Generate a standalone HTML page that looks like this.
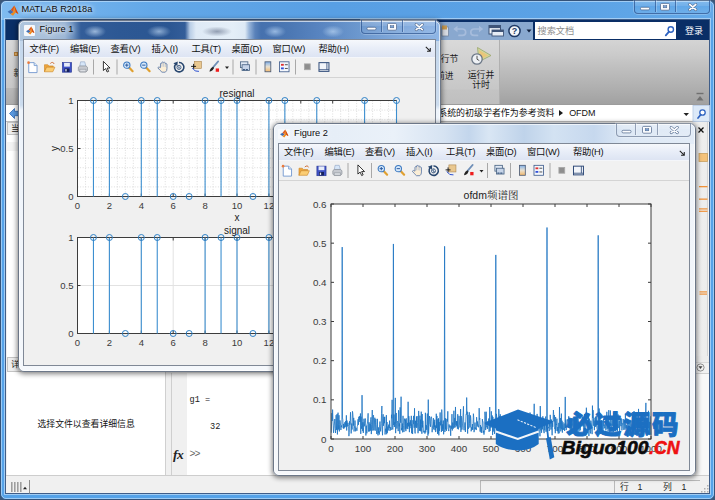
<!DOCTYPE html><html lang="zh"><head><meta charset="utf-8"><title>MATLAB R2018a</title><style>
*{box-sizing:border-box}
html,body{margin:0;padding:0}
body{width:715px;height:500px;overflow:hidden;position:relative;background:#3d5878;font-family:"Liberation Sans","Noto Sans CJK SC",sans-serif;font-size:9.5px;line-height:1;color:#111}
.abs{position:absolute;left:0;top:0;pointer-events:none}
#mw{position:absolute;left:0;top:0;width:715px;height:500px;border:1px solid #34537a;border-radius:6px;
 background:linear-gradient(90deg,#7fbbf0 0,#78b6ee 40px,#63a8e8 150px,#589fe4 330px,#5ba2e5 560px,#64a9e9 715px) 0 0/100% 19px no-repeat,#55a2e8}
#mw:before{content:"";position:absolute;left:0;top:0;right:0;bottom:0;border:1px solid rgba(215,236,255,.55);border-radius:5px}
#mtitle{position:absolute;left:20.5px;top:4.2px;font-size:9.2px;color:#0c0c0c;white-space:nowrap;text-shadow:0 0 4px rgba(255,255,255,.9),0 0 7px rgba(255,255,255,.8)}
.wbtns{position:absolute;border:1px solid rgba(45,85,145,.75);border-top:0;border-radius:0 0 4px 4px;background:linear-gradient(rgba(255,255,255,.22),rgba(255,255,255,.10) 45%,rgba(255,255,255,0) 50%,rgba(255,255,255,.08));box-shadow:0 0 0 1px rgba(255,255,255,.22)}
.wbtns.lt{border-color:rgba(120,135,160,.8)}
.wbtns.lt i{background:rgba(120,135,160,.75)}
.wbtns i{position:absolute;top:0;width:1px;height:12px;background:rgba(45,85,145,.7);box-shadow:1px 0 0 rgba(255,255,255,.25)}
#mc{position:absolute;left:4px;top:18px;width:705px;height:475px;background:#f0f0f0;border:1px solid #3f5d88;box-shadow:0 0 0 1px rgba(210,232,252,.6);overflow:hidden}
#navy{position:absolute;background:#0a2e66}
#qat{position:absolute;background:#89a8cf}
#search{position:absolute;background:#fff}
#search span{position:absolute;left:3px;top:5.3px;font-size:9.2px;color:#8c8c8c;white-space:nowrap}
#login{position:absolute;font-size:9px;color:#fff;white-space:nowrap}
#ribbon{position:absolute;background:linear-gradient(#d4d4d4 0,#cbcbcb 14px,#bfbfbf 28px,#b4b4b4 42px,#aaaaaa 54px,#a1a1a1 64px)}
#rsec{position:absolute;left:0;top:0;width:494px;height:64px;border-right:1px solid #b0b0b0;background:linear-gradient(#d9d9d9 0,#d1d1d1 20px,#c7c7c7 49px,#c3c3c3 50px,#bfbfbf 64px)}
.rt{position:absolute;font-size:8.8px;color:#1a1a1a;white-space:nowrap}
#addr{position:absolute;background:#fff;border-top:1px solid #9c9c9c;border-bottom:1px solid #bdbdbd}
#addrt{position:absolute;left:432.2px;top:4.2px;font-size:8.96px;white-space:nowrap;color:#111}
#addrt b{display:inline-block;width:0;height:0;border-left:4.2px solid #1a1a1a;border-top:3.3px solid transparent;border-bottom:3.3px solid transparent;margin:0 6.2px 0.6px 4.4px}
#addrt i{font-style:normal;font-size:8.96px}
#below{position:absolute;background:#f0f0f0}
#lp_hdr1{position:absolute;background:#eeeeee;border:1px solid #c4c4c4;font-size:8.5px;line-height:10.5px;padding-left:3px;color:#222;overflow:hidden}
#lp_col{position:absolute;background:linear-gradient(#fff 0,#fff 7px,#f3f3f3 7px,#f3f3f3 16px,#fff 16px)}
#lp_hdr2{position:absolute;background:#eeeeee;border:1px solid #c4c4c4;font-size:8.5px;line-height:12.5px;padding-left:3px;color:#222;overflow:hidden}
#lp_detail{position:absolute;background:#fff;border-right:1px solid #d0d0d0}
#lp_detail span{position:absolute;left:30.5px;top:48.8px;font-size:8.85px;white-space:nowrap;color:#111}
#cmd{position:absolute;background:#fff;border-left:1px solid #cfcfcf;overflow:hidden}
#cmdg{position:absolute;left:0;top:0;width:15px;height:103px;background:#f0f0f0}
.mono{position:absolute;font-family:"Liberation Mono",monospace;font-size:8.6px;color:#222;white-space:nowrap}
#fx{position:absolute;left:1.5px;top:75px;font-family:"Liberation Serif",serif;font-style:italic;font-weight:bold;font-size:13.5px;color:#222;letter-spacing:-0.5px}
#rstrip{position:absolute;background:linear-gradient(90deg,#f1f1f1 0,#ececec 12px,#d4d4d4 12px,#d4d4d4 13px,#f4f4f4 13px)}
#status{position:absolute;background:#f0f0f0;border-top:1px solid #cdcdcd}
#st1{position:absolute;left:474px;top:3.5px;width:133.5px;height:14px;border:1px solid #b9b9b9;border-right:0;border-bottom:0}
#st3{position:absolute;left:607.5px;top:3.5px;width:86px;height:14px;border:1px solid #b9b9b9;border-right:0;border-bottom:0;font-size:8.8px;color:#222}
#st3 span{position:absolute;top:2.2px}
.fw{position:absolute;border:1px solid #6c7788;border-radius:6px;box-shadow:0 1px 5px 1px rgba(0,0,0,.48)}
.fw:before{content:"";position:absolute;left:0;top:0;right:0;bottom:0;border:1px solid rgba(255,255,255,.65);border-radius:5px}
.ficon{position:absolute;left:4.8px;top:4.5px;width:11.5px;height:10.5px;background:#f6f8fb;border-radius:1px}
.ftitle{position:absolute;left:20.5px;top:4.5px;font-size:9.25px;color:#0c0c0c;white-space:nowrap;text-shadow:0 0 4px rgba(255,255,255,.95),0 0 7px rgba(255,255,255,.85)}
.finner{position:absolute;background:#f0f0f0;border:1px solid #7f8896;overflow:hidden}
.fmenu{position:absolute;left:0;top:0;right:0;height:17.500px;background:linear-gradient(#f6f8fc,#e9eef8 45%,#dde4f3);border-bottom:1px solid #f4f6fa}
.fmenu span{position:absolute;top:4.600px;font-size:9.300px;white-space:nowrap;color:#111;letter-spacing:-0.200px}
.ftool{position:absolute;left:0;top:17.500px;right:0;height:20px;background:#f1f1f1;border-bottom:1px solid #d4d4d4}
</style></head><body><div id="mw"><svg width="12" height="11.5" viewBox="0 0 16 16" style="position:absolute;left:5.5px;top:3.8px"><path d="M0.5 9.5 L5 6.5 L8.5 10 L4.5 12.5 Z" fill="#3f6fb5"/><path d="M5 6.5 L9.8 0.8 L8.5 10 Z" fill="#d9541e"/><path d="M9.8 0.8 L15.5 12.5 L11.5 10.5 L8 15 L4.5 12.5 L8.5 10 Z" fill="#f08a1c"/><path d="M9.8 0.8 L15.5 12.5 L12 10.6 Z" fill="#c8401a"/></svg><div id="mtitle">MATLAB R2018a</div><div class="wbtns" style="left:633px;top:-1px;width:76px;height:14px"><i style="left:20px"></i><i style="left:39.5px"></i><svg width="76" height="13" viewBox="0 0 76 13" style="position:absolute;left:0;top:0"><rect x="5.5" y="7.3" width="9" height="2.6" rx="1.1" fill="#fbfcfe" stroke="#4a6388" stroke-width="0.7"/><rect x="25.5" y="3.4" width="9" height="6.8" rx="1.2" fill="#fbfcfe" stroke="#4a6388" stroke-width="0.7"/><rect x="28.2" y="5.7" width="3.6" height="2.1" fill="#7aa3d6" stroke="#4a6388" stroke-width="0.5"/><path d="M54.7 4.5 L60.8 9.6 M60.8 4.5 L54.7 9.6" stroke="#4a6388" stroke-width="2.9" stroke-linecap="round"/><path d="M54.7 4.5 L60.8 9.6 M60.8 4.5 L54.7 9.6" stroke="#fbfcfe" stroke-width="1.7" stroke-linecap="round"/></svg></div><div id="mc"><div id="navy" style="left:0px;top:0px;width:703px;height:20px;"></div><div id="qat" style="left:432px;top:1.5px;width:95px;height:18px;"></div><div id="search" style="left:528.5px;top:1.5px;width:141.5px;height:17.5px;"><span>搜索文档</span></div><div id="login" style="left:679px;top:6.5px;">登录</div><div id="ribbon" style="left:0px;top:20px;width:703px;height:64px;"><div id="rsec"></div></div><div class="rt" style="left:426px;top:34.5px;">运行节</div><div class="rt" style="left:430px;top:52px;">前进</div><div class="rt" style="left:456px;top:49.5px;width:38px;;text-align:center;line-height:10.5px">运行并<br>计时</div><div style="position:absolute;left:0px;top:68px;width:14px;height:16px;;background:linear-gradient(#b9b9b9,#adadad)"></div><div style="position:absolute;left:8px;top:32px;width:3.5px;height:4px;;background:#e9b56a;border:1px solid #b9813a"></div><div class="rt" style="left:7.5px;top:48.5px;;font-size:9px">新</div><div id="addr" style="left:0px;top:84px;width:703px;height:17.5px;"><span id="addrt">系统的初级学者作为参考资料<b></b><i>OFDM</i></span></div><div id="below" style="left:0px;top:101.5px;width:703px;height:355px;"></div><div id="lp_hdr1" style="left:1px;top:102px;width:160px;height:12.5px;">当</div><div id="lp_col" style="left:1px;top:114.5px;width:159px;height:222px;"></div><div id="lp_hdr2" style="left:1px;top:336.5px;width:160px;height:15px;">详</div><div id="lp_detail" style="left:1px;top:351.5px;width:158.5px;height:103.5px;"><span>选择文件以查看详细信息</span></div><div id="cmd" style="left:164.5px;top:352.5px;width:110px;height:102.5px;"><div id="cmdg"></div><div class="mono" style="left:18px;top:23px">g1 =</div><div class="mono" style="left:38.5px;top:50px">32</div><div id="fx">fx</div><div class="mono" style="left:18px;top:77px;color:#666;letter-spacing:-0.9px;font-size:10px">&gt;&gt;</div></div><div id="rstrip" style="left:689px;top:101.5px;width:14px;height:355px;"></div><div style="position:absolute;left:689px;top:336px;width:14px;height:6px;;background:#ededed"></div><div style="position:absolute;left:689px;top:341.5px;width:14px;height:12.5px;;background:#f1f1f1;border-top:1px solid #d9d9d9;border-bottom:1px solid #cfcfcf"></div><div style="position:absolute;left:689px;top:354px;width:14px;height:101px;;background:linear-gradient(90deg,#e9e9e9,#f8f8f8 5px)"></div><div id="status" style="left:0px;top:455px;width:703px;height:18px;"><div id="st1"></div><div id="st3"><span style="left:5.5px">行</span><span style="left:23px">1</span><span style="left:48.5px">列</span><span style="left:67px">1</span></div></div></div><svg class="abs" width="715" height="500" viewBox="0 0 715 500"><path d="M8.5 112.5 L13.5 107.5 V110.3 H18.500 V114.7 H13.5 V117.5 Z" fill="#5b9ae0" stroke="#2f68b4" stroke-width="0.8"/><rect x="441" y="26" width="6.500" height="9" fill="#d9dde4" stroke="#6b7c96" stroke-width="0.7"/><rect x="441" y="24.500" width="5" height="4" fill="#c89a50"/><g fill="none" stroke="#a6bcdc" stroke-width="1.700" stroke-linecap="round"><path d="M455.500 28 h6 a3.200 3.200 0 0 1 0 6.400 h-3.500"/><path d="M479 28 h-6 a3.200 3.200 0 0 0 0 6.400 h3.500"/></g><path d="M456.500 24.800 L452.300 28 L456.500 31.200 Z" fill="#a6bcdc"/><path d="M478 24.800 L482.200 28 L478 31.200 Z" fill="#a6bcdc"/><rect x="488" y="24.500" width="11.500" height="8.500" fill="#eef2f8" stroke="#3f5478" stroke-width="1"/><rect x="488" y="24.500" width="11.500" height="2.600" fill="#3f5478"/><rect x="491" y="29" width="11.500" height="6" fill="#e6ecf5" stroke="#3f5478" stroke-width="0.900"/><rect x="491" y="29" width="11.500" height="2" fill="#3f5478"/><circle cx="513.5" cy="30" r="5.600" fill="#f4f6fa" stroke="#1f3a66" stroke-width="1.500"/><text x="513.5" y="33.400" font-family='"Liberation Sans",sans-serif' font-weight="bold" font-size="9" text-anchor="middle" fill="#1f3a66">?</text><path d="M525.500 28.500 h5 l-2.500 3 Z" fill="#10213f"/><circle cx="669.800" cy="28.500" r="2.700" fill="#fff" stroke="#2d62c0" stroke-width="1.400"/><path d="M667.800 30.800 L664.800 34.300" stroke="#2d62c0" stroke-width="1.800" stroke-linecap="round"/><path d="M476.500 46.500 L490 54.500 L478 60.500 Z" fill="#cfd9a0" stroke="#9aa56a" stroke-width="0.8"/><path d="M478 49 L487.500 54.600 L479 58.500 Z" fill="#e9c77a"/><circle cx="476" cy="58" r="5.200" fill="#eef1f5" stroke="#6a7686" stroke-width="1.300"/><path d="M476 54.800 V58.200 L478.300 59.600" stroke="#444" stroke-width="0.9" fill="none"/><path d="M695.500 92.500 h7" stroke="#707070" stroke-width="1.400"/><path d="M695.500 99.500 h7 l-3.500 -4.500 Z" fill="#707070"/><path d="M682.500 112 h5.500 l-2.750 3 Z" fill="#222"/><rect x="692" y="104.500" width="16.500" height="16" fill="#dce9f8" stroke="#b3c8e4" stroke-width="0.8"/><circle cx="701.500" cy="111.500" r="2.700" fill="#fff" stroke="#2d62c0" stroke-width="1.300"/><path d="M699.700 113.700 L697 117" stroke="#2d62c0" stroke-width="1.700" stroke-linecap="round"/><path d="M697.500 126.500 l5 5 m0 -5 l-5 5" stroke="#111" stroke-width="1.300"/><rect x="698" y="152.500" width="8.500" height="8" fill="#f4c27a" stroke="#c8a060" stroke-width="0.8"/><rect x="698" y="185" width="8.500" height="1.300" fill="#f0923a"/><rect x="698" y="197.5" width="8.500" height="1.300" fill="#f0923a"/><rect x="698" y="207.300" width="8.500" height="1.200" fill="#f0923a"/><rect x="698" y="209.700" width="8.500" height="1.200" fill="#f0923a"/><rect x="698.500" y="290.300" width="7.500" height="1.200" fill="#f0923a"/><rect x="698.500" y="292.500" width="7.500" height="1.200" fill="#f0923a"/><circle cx="699.500" cy="366.500" r="3.600" fill="#f2f2f2" stroke="#777" stroke-width="0.8"/><path d="M697.500 365.300 h4 l-2 2.600 Z" fill="#444"/><path d="M10.800 481 v10 M13.800 481 v10 M16.800 481 v10 M19.800 481 v10" stroke="#9a9a9a" stroke-width="1.500"/><path d="M22 488.300 h4 l-2 -2.500 Z" fill="#222"/><rect x="28" y="479" width="1" height="13.500" fill="#8e8e8e"/><g fill="#b0b0b0"><rect x="706" y="490" width="1.500" height="1.500"/><rect x="703" y="490" width="1.500" height="1.500"/><rect x="706" y="487" width="1.500" height="1.500"/><rect x="700" y="490" width="1.500" height="1.500"/><rect x="703" y="487" width="1.500" height="1.500"/><rect x="706" y="484" width="1.500" height="1.500"/></g></svg></div><div class="fw" style="left:18px;top:19.5px;width:423px;height:352px;background:radial-gradient(ellipse 11px 6px at 76px 10.5px,rgba(160,188,222,.95),rgba(160,188,222,0)) 0 0/100% 20px no-repeat,radial-gradient(ellipse 12px 6px at 140px 10.5px,rgba(150,180,216,.9),rgba(150,180,216,0)) 0 0/100% 20px no-repeat,radial-gradient(ellipse 15px 5px at 198px 10.5px,rgba(120,132,155,.75),rgba(120,132,155,0)) 0 0/100% 20px no-repeat,radial-gradient(ellipse 11px 6px at 256px 10.5px,rgba(160,192,230,.9),rgba(160,192,230,0)) 0 0/100% 20px no-repeat,radial-gradient(ellipse 11px 6px at 314px 10.5px,rgba(165,196,232,.9),rgba(165,196,232,0)) 0 0/100% 20px no-repeat,linear-gradient(90deg,#afc5dd 0,#a8c0da 30px,#9cb6d5 46px,#6a8fbe 54px,#335d99 62px,#2d5894 100px,#2b5692 150px,#335d99 166px,#b9cde6 171px,#dfeaf6 177px,#e4eef8 214px,#dde9f5 226px,#9ab6da 230px,#5a82ba 236px,#4671ae 242px,#4c78b4 272px,#5884c0 300px,#6d99cf 342px,#82aadc 380px,#8fb6e6 423px) 0 0/100% 20px no-repeat,linear-gradient(#bcd2ea 0,#c4d7ec 20px,#ccdcee 84px,#eef4fb 89px,#f5f8fc 100%)"><div class="ficon"></div><svg width="10.5" height="9" viewBox="0 0 16 16" style="position:absolute;left:5.5px;top:5.2px"><path d="M0.5 9.5 L5 6.5 L8.5 10 L4.5 12.5 Z" fill="#3f6fb5"/><path d="M5 6.5 L9.8 0.8 L8.5 10 Z" fill="#d9541e"/><path d="M9.8 0.8 L15.5 12.5 L11.5 10.5 L8 15 L4.5 12.5 L8.5 10 Z" fill="#f08a1c"/><path d="M9.8 0.8 L15.5 12.5 L12 10.6 Z" fill="#c8401a"/></svg><div class="ftitle">Figure 1</div><div class="wbtns " style="left:342px;top:-1px;width:75px;height:14px"><i style="left:18.5px"></i><i style="left:40px"></i><svg width="75" height="13" viewBox="0 0 75 13" style="position:absolute;left:0;top:0"><rect x="5" y="7.3" width="9" height="2.6" rx="1.1" fill="#fbfcfe" stroke="#4a6388" stroke-width="0.7"/><rect x="25.5" y="3.4" width="9" height="6.8" rx="1.2" fill="#fbfcfe" stroke="#4a6388" stroke-width="0.7"/><rect x="28.2" y="5.7" width="3.6" height="2.1" fill="#7aa3d6" stroke="#4a6388" stroke-width="0.5"/><path d="M54.2 4.5 L60.3 9.6 M60.3 4.5 L54.2 9.6" stroke="#4a6388" stroke-width="2.9" stroke-linecap="round"/><path d="M54.2 4.5 L60.3 9.6 M60.3 4.5 L54.2 9.6" stroke="#fbfcfe" stroke-width="1.7" stroke-linecap="round"/></svg></div><div class="finner" style="left:4px;top:18.5px;width:412.5px;height:327px"><div class="fmenu"><span style="left:5.5px">文件(F)</span><span style="left:46.0px">编辑(E)</span><span style="left:86.5px">查看(V)</span><span style="left:127.5px">插入(I)</span><span style="left:167.5px">工具(T)</span><span style="left:207.5px">桌面(D)</span><span style="left:248.5px">窗口(W)</span><span style="left:294.5px">帮助(H)</span><svg width="6.5" height="6.5" viewBox="0 0 8 8" style="position:absolute;right:3.5px;top:6px"><path d="M1 1 L6 6 M6.5 2.500 V6.500 H2.500" stroke="#222" stroke-width="1.300" fill="none"/></svg></div><div class="ftool"></div></div></div><svg class="abs" width="715" height="500" viewBox="0 0 715 500"><g transform="translate(26.66,60.57) scale(0.83)"><path d="M2.5 2.5 H9 L12.5 6 V14.5 H2.5 Z" fill="#fff" stroke="#7399d0" stroke-width="1.1"/><path d="M9 2.5 V6 H12.5" fill="#dde8f5" stroke="#7399d0" stroke-width="1"/><circle cx="2.3" cy="2.5" r="1.6" fill="#ea7a3c"/></g><g transform="translate(43.66,60.57) scale(0.83)"><path d="M1 5 H5 L6.5 6.5 H11.5 V8 H3.5 L1 13.5 Z" fill="#f0a63c" stroke="#cf8a2a" stroke-width="0.8"/><path d="M3.5 8 H13.5 L11 13.5 H1 Z" fill="#fbcd74" stroke="#cf8a2a" stroke-width="0.8"/><path d="M8 3.5 C10 1.5 12 2 12.5 4" fill="none" stroke="#c85a1a" stroke-width="1"/></g><g transform="translate(61.16,60.57) scale(0.83)"><rect x="1.5" y="2.5" width="11" height="11.5" fill="#3f52c6" stroke="#2b3a94" stroke-width="0.8"/><rect x="3.5" y="2.8" width="7" height="4.5" fill="#e6ecfa"/><rect x="4" y="9.5" width="6" height="4.2" fill="#15205a"/><rect x="5" y="10.3" width="1.6" height="2.8" fill="#dfe5f5"/></g><g transform="translate(77.66,60.57) scale(0.83)"><path d="M3.5 1.5 H8.5 L10 7 H2.5 Z" fill="#d6e6f8" stroke="#8aa0c0" stroke-width="0.7"/><path d="M0.8 8 L2.5 6.5 H10 L11.8 8 V12 L10 13.8 H2.5 L0.8 12 Z" fill="#c6c9cf" stroke="#868b93" stroke-width="0.8"/><path d="M2.5 10.5 H10 V13.5 H2.5 Z" fill="#dcdfe4" stroke="#80858d" stroke-width="0.6"/></g><rect x="93.0" y="59.5" width="1" height="15" fill="#a8a8a8"/><g transform="translate(102.16,60.57) scale(0.83)"><path d="M1.5 1 L1.5 12 L4.2 9.6 L6 13.8 L7.8 13 L6 9 L9.5 9 Z" fill="#fff" stroke="#111" stroke-width="1" stroke-linejoin="round"/></g><rect x="116.5" y="59.5" width="1" height="15" fill="#a8a8a8"/><g transform="translate(122.66,60.57) scale(0.83)"><path d="M7.5 8 L12 12.8" stroke="#e0a030" stroke-width="2.6" stroke-linecap="round"/><circle cx="5" cy="5.5" r="3.8" fill="#d6e9fb" stroke="#3a78c0" stroke-width="1.3"/><path d="M3 5.5 H7 M5 3.5 V7.5" stroke="#2a5aa0" stroke-width="1.2"/></g><g transform="translate(139.66,60.57) scale(0.83)"><path d="M7.5 8 L12 12.8" stroke="#e0a030" stroke-width="2.6" stroke-linecap="round"/><circle cx="5" cy="5.5" r="3.8" fill="#d6e9fb" stroke="#3a78c0" stroke-width="1.3"/><path d="M3 5.5 H7" stroke="#2a5aa0" stroke-width="1.2"/></g><g transform="translate(157.16,60.57) scale(0.83)"><path d="M4 8.5 V3.6 Q4.9 2.4 5.8 3.6 V2.2 Q6.8 1 7.8 2.2 V2.6 Q8.8 1.5 9.8 2.7 V3.9 Q10.8 3 11.8 4.2 V9.5 Q12 12.5 9.8 14 H5.8 Q3 11.5 0.8 8.6 Q1.8 6.8 4 8.5 Z" fill="#fbeed6" stroke="#5a78a8" stroke-width="1"/><path d="M5.8 3.6 V7.5 M7.8 2.6 V7.5 M9.8 3.9 V7.8" stroke="#9ab0d0" stroke-width="0.7"/></g><g transform="translate(173.16,60.57) scale(0.83)"><path d="M3.2 4.2 A5.6 5.6 0 1 0 7 2.4" fill="none" stroke="#27466e" stroke-width="1.9"/><path d="M0.3 3.2 L5.6 1.2 L5 6.4 Z" fill="#27466e"/><circle cx="7" cy="8.2" r="2.5" fill="#f2f5fb" stroke="#27466e" stroke-width="0.9"/><path d="M7 5.700 V10.700 M4.800 7.200 L9.200 9.400" stroke="#27466e" stroke-width="0.6"/></g><g transform="translate(190.66,60.57) scale(0.83)"><rect x="4.5" y="1" width="8.5" height="8.5" fill="#e9c890" stroke="#a9824a" stroke-width="0.7"/><path d="M0.5 7 H6.5 M3.5 4 V10" stroke="#111" stroke-width="1.1"/><path d="M2 9 Q5 14 10 13" fill="none" stroke="#2a4fd0" stroke-width="1.2"/></g><g transform="translate(208.66,60.57) scale(0.83)"><path d="M11.5 1 L5 8.5" stroke="#6f8fb8" stroke-width="2" stroke-linecap="round"/><path d="M5.5 7.5 L3 9 Q1 11.5 1 13.5 Q3.5 13 5 11.5 L6.5 9 Z" fill="#222"/><rect x="8.5" y="9.5" width="4" height="4" fill="#ee1c1c"/></g><path d="M225.0 66.5 h4 l-2 2.4 Z" fill="#222"/><rect x="232.5" y="59.5" width="1" height="15" fill="#a8a8a8"/><g transform="translate(239.16,60.57) scale(0.83)"><rect x="1.5" y="1.5" width="9" height="7" fill="#dfe8f4" stroke="#4a6484" stroke-width="1"/><rect x="3.5" y="5" width="9" height="7" fill="#c6d4e8" stroke="#4a6484" stroke-width="1"/><path d="M4.5 11 h2.5 m1 0 h2.5" stroke="#3c5a80" stroke-width="1.6"/></g><rect x="255.5" y="59.5" width="1" height="15" fill="#a8a8a8"/><defs><linearGradient id="cb18" x1="0" y1="0" x2="0" y2="1"><stop offset="0" stop-color="#7fb0ea"/><stop offset="0.5" stop-color="#e8e0d0"/><stop offset="1" stop-color="#f3b86a"/></linearGradient></defs><g transform="translate(264.16,60.57) scale(0.83)"><rect x="1" y="1.5" width="7" height="12" fill="url(#cb18)" stroke="#4a5a74" stroke-width="1"/></g><g transform="translate(278.66,60.57) scale(0.83)"><rect x="1" y="1.5" width="11.5" height="12" fill="#f4f7fc" stroke="#3f5c8c" stroke-width="1"/><rect x="2.8" y="4" width="3.4" height="2.2" fill="#e03030"/><rect x="2.8" y="8.3" width="3.4" height="2.2" fill="#3050d8"/><path d="M7.5 5 h3.5 M7.5 9.5 h3.5" stroke="#333" stroke-width="1"/></g><rect x="295.0" y="59.5" width="1" height="15" fill="#a8a8a8"/><g transform="translate(303.16,60.57) scale(0.83)"><rect x="1.5" y="4" width="7" height="7" fill="#8e8e8e" stroke="#a8a8a8" stroke-width="1"/></g><g transform="translate(318.16,60.57) scale(0.83)"><rect x="1" y="2.5" width="12" height="10.5" fill="#f2f5fa" stroke="#2f4a78" stroke-width="1.2"/><path d="M1 11 H13 M10.5 2.5 V11" stroke="#2f4a78" stroke-width="1"/></g><g font-family='"Liberation Sans",sans-serif' font-size="9.5" fill="#3a3a3a"><rect x="77.5" y="100.5" width="319.0" height="96.0" fill="#fff"/><line x1="85.47" y1="100.5" x2="85.47" y2="196.5" stroke="#d4d4d4" stroke-width="0.8" stroke-dasharray="1 1.6"/><line x1="93.45" y1="100.5" x2="93.45" y2="196.5" stroke="#d4d4d4" stroke-width="0.8" stroke-dasharray="1 1.6"/><line x1="101.42" y1="100.5" x2="101.42" y2="196.5" stroke="#d4d4d4" stroke-width="0.8" stroke-dasharray="1 1.6"/><line x1="109.40" y1="100.5" x2="109.40" y2="196.5" stroke="#d4d4d4" stroke-width="0.8" stroke-dasharray="1 1.6"/><line x1="117.38" y1="100.5" x2="117.38" y2="196.5" stroke="#d4d4d4" stroke-width="0.8" stroke-dasharray="1 1.6"/><line x1="125.35" y1="100.5" x2="125.35" y2="196.5" stroke="#d4d4d4" stroke-width="0.8" stroke-dasharray="1 1.6"/><line x1="133.32" y1="100.5" x2="133.32" y2="196.5" stroke="#d4d4d4" stroke-width="0.8" stroke-dasharray="1 1.6"/><line x1="141.30" y1="100.5" x2="141.30" y2="196.5" stroke="#d4d4d4" stroke-width="0.8" stroke-dasharray="1 1.6"/><line x1="149.27" y1="100.5" x2="149.27" y2="196.5" stroke="#d4d4d4" stroke-width="0.8" stroke-dasharray="1 1.6"/><line x1="157.25" y1="100.5" x2="157.25" y2="196.5" stroke="#d4d4d4" stroke-width="0.8" stroke-dasharray="1 1.6"/><line x1="165.22" y1="100.5" x2="165.22" y2="196.5" stroke="#d4d4d4" stroke-width="0.8" stroke-dasharray="1 1.6"/><line x1="173.20" y1="100.5" x2="173.20" y2="196.5" stroke="#d4d4d4" stroke-width="0.8" stroke-dasharray="1 1.6"/><line x1="181.18" y1="100.5" x2="181.18" y2="196.5" stroke="#d4d4d4" stroke-width="0.8" stroke-dasharray="1 1.6"/><line x1="189.15" y1="100.5" x2="189.15" y2="196.5" stroke="#d4d4d4" stroke-width="0.8" stroke-dasharray="1 1.6"/><line x1="197.12" y1="100.5" x2="197.12" y2="196.5" stroke="#d4d4d4" stroke-width="0.8" stroke-dasharray="1 1.6"/><line x1="205.10" y1="100.5" x2="205.10" y2="196.5" stroke="#d4d4d4" stroke-width="0.8" stroke-dasharray="1 1.6"/><line x1="213.07" y1="100.5" x2="213.07" y2="196.5" stroke="#d4d4d4" stroke-width="0.8" stroke-dasharray="1 1.6"/><line x1="221.05" y1="100.5" x2="221.05" y2="196.5" stroke="#d4d4d4" stroke-width="0.8" stroke-dasharray="1 1.6"/><line x1="229.03" y1="100.5" x2="229.03" y2="196.5" stroke="#d4d4d4" stroke-width="0.8" stroke-dasharray="1 1.6"/><line x1="237.00" y1="100.5" x2="237.00" y2="196.5" stroke="#d4d4d4" stroke-width="0.8" stroke-dasharray="1 1.6"/><line x1="244.97" y1="100.5" x2="244.97" y2="196.5" stroke="#d4d4d4" stroke-width="0.8" stroke-dasharray="1 1.6"/><line x1="252.95" y1="100.5" x2="252.95" y2="196.5" stroke="#d4d4d4" stroke-width="0.8" stroke-dasharray="1 1.6"/><line x1="260.92" y1="100.5" x2="260.92" y2="196.5" stroke="#d4d4d4" stroke-width="0.8" stroke-dasharray="1 1.6"/><line x1="268.90" y1="100.5" x2="268.90" y2="196.5" stroke="#d4d4d4" stroke-width="0.8" stroke-dasharray="1 1.6"/><line x1="276.88" y1="100.5" x2="276.88" y2="196.5" stroke="#d4d4d4" stroke-width="0.8" stroke-dasharray="1 1.6"/><line x1="284.85" y1="100.5" x2="284.85" y2="196.5" stroke="#d4d4d4" stroke-width="0.8" stroke-dasharray="1 1.6"/><line x1="292.82" y1="100.5" x2="292.82" y2="196.5" stroke="#d4d4d4" stroke-width="0.8" stroke-dasharray="1 1.6"/><line x1="300.80" y1="100.5" x2="300.80" y2="196.5" stroke="#d4d4d4" stroke-width="0.8" stroke-dasharray="1 1.6"/><line x1="308.77" y1="100.5" x2="308.77" y2="196.5" stroke="#d4d4d4" stroke-width="0.8" stroke-dasharray="1 1.6"/><line x1="316.75" y1="100.5" x2="316.75" y2="196.5" stroke="#d4d4d4" stroke-width="0.8" stroke-dasharray="1 1.6"/><line x1="324.73" y1="100.5" x2="324.73" y2="196.5" stroke="#d4d4d4" stroke-width="0.8" stroke-dasharray="1 1.6"/><line x1="332.70" y1="100.5" x2="332.70" y2="196.5" stroke="#d4d4d4" stroke-width="0.8" stroke-dasharray="1 1.6"/><line x1="340.68" y1="100.5" x2="340.68" y2="196.5" stroke="#d4d4d4" stroke-width="0.8" stroke-dasharray="1 1.6"/><line x1="348.65" y1="100.5" x2="348.65" y2="196.5" stroke="#d4d4d4" stroke-width="0.8" stroke-dasharray="1 1.6"/><line x1="356.62" y1="100.5" x2="356.62" y2="196.5" stroke="#d4d4d4" stroke-width="0.8" stroke-dasharray="1 1.6"/><line x1="364.60" y1="100.5" x2="364.60" y2="196.5" stroke="#d4d4d4" stroke-width="0.8" stroke-dasharray="1 1.6"/><line x1="372.57" y1="100.5" x2="372.57" y2="196.5" stroke="#d4d4d4" stroke-width="0.8" stroke-dasharray="1 1.6"/><line x1="380.55" y1="100.5" x2="380.55" y2="196.5" stroke="#d4d4d4" stroke-width="0.8" stroke-dasharray="1 1.6"/><line x1="388.52" y1="100.5" x2="388.52" y2="196.5" stroke="#d4d4d4" stroke-width="0.8" stroke-dasharray="1 1.6"/><line x1="77.5" y1="110.10" x2="396.5" y2="110.10" stroke="#d4d4d4" stroke-width="0.8" stroke-dasharray="1 1.6"/><line x1="77.5" y1="119.70" x2="396.5" y2="119.70" stroke="#d4d4d4" stroke-width="0.8" stroke-dasharray="1 1.6"/><line x1="77.5" y1="129.30" x2="396.5" y2="129.30" stroke="#d4d4d4" stroke-width="0.8" stroke-dasharray="1 1.6"/><line x1="77.5" y1="138.90" x2="396.5" y2="138.90" stroke="#d4d4d4" stroke-width="0.8" stroke-dasharray="1 1.6"/><line x1="77.5" y1="148.50" x2="396.5" y2="148.50" stroke="#d4d4d4" stroke-width="0.8" stroke-dasharray="1 1.6"/><line x1="77.5" y1="158.10" x2="396.5" y2="158.10" stroke="#d4d4d4" stroke-width="0.8" stroke-dasharray="1 1.6"/><line x1="77.5" y1="167.70" x2="396.5" y2="167.70" stroke="#d4d4d4" stroke-width="0.8" stroke-dasharray="1 1.6"/><line x1="77.5" y1="177.30" x2="396.5" y2="177.30" stroke="#d4d4d4" stroke-width="0.8" stroke-dasharray="1 1.6"/><line x1="77.5" y1="186.90" x2="396.5" y2="186.90" stroke="#d4d4d4" stroke-width="0.8" stroke-dasharray="1 1.6"/><rect x="77.5" y="100.5" width="319.0" height="96.0" fill="none" stroke="#3c3c3c" stroke-width="1"/><path d="M77.50 196.5 v-3 M77.50 100.5 v3" stroke="#3c3c3c" stroke-width="1"/><text x="77.50" y="209.0" text-anchor="middle">0</text><path d="M109.40 196.5 v-3 M109.40 100.5 v3" stroke="#3c3c3c" stroke-width="1"/><text x="109.40" y="209.0" text-anchor="middle">2</text><path d="M141.30 196.5 v-3 M141.30 100.5 v3" stroke="#3c3c3c" stroke-width="1"/><text x="141.30" y="209.0" text-anchor="middle">4</text><path d="M173.20 196.5 v-3 M173.20 100.5 v3" stroke="#3c3c3c" stroke-width="1"/><text x="173.20" y="209.0" text-anchor="middle">6</text><path d="M205.10 196.5 v-3 M205.10 100.5 v3" stroke="#3c3c3c" stroke-width="1"/><text x="205.10" y="209.0" text-anchor="middle">8</text><path d="M237.00 196.5 v-3 M237.00 100.5 v3" stroke="#3c3c3c" stroke-width="1"/><text x="237.00" y="209.0" text-anchor="middle">10</text><path d="M268.90 196.5 v-3 M268.90 100.5 v3" stroke="#3c3c3c" stroke-width="1"/><text x="268.90" y="209.0" text-anchor="middle">12</text><path d="M300.80 196.5 v-3 M300.80 100.5 v3" stroke="#3c3c3c" stroke-width="1"/><text x="300.80" y="209.0" text-anchor="middle">14</text><path d="M332.70 196.5 v-3 M332.70 100.5 v3" stroke="#3c3c3c" stroke-width="1"/><text x="332.70" y="209.0" text-anchor="middle">16</text><path d="M364.60 196.5 v-3 M364.60 100.5 v3" stroke="#3c3c3c" stroke-width="1"/><text x="364.60" y="209.0" text-anchor="middle">18</text><path d="M396.50 196.5 v-3 M396.50 100.5 v3" stroke="#3c3c3c" stroke-width="1"/><text x="396.50" y="209.0" text-anchor="middle">20</text><path d="M77.5 196.50 h3 M396.5 196.50 h-3" stroke="#3c3c3c" stroke-width="1"/><text x="73.5" y="199.90" text-anchor="end">0</text><path d="M77.5 148.50 h3 M396.5 148.50 h-3" stroke="#3c3c3c" stroke-width="1"/><text x="73.5" y="151.90" text-anchor="end">0.5</text><path d="M77.5 100.50 h3 M396.5 100.50 h-3" stroke="#3c3c3c" stroke-width="1"/><text x="73.5" y="103.90" text-anchor="end">1</text><line x1="93.45" y1="196.5" x2="93.45" y2="100.5" stroke="#3d8fd0" stroke-width="1.1"/><circle cx="93.45" cy="100.5" r="3" fill="none" stroke="#2f82c8" stroke-width="1"/><line x1="109.40" y1="196.5" x2="109.40" y2="100.5" stroke="#3d8fd0" stroke-width="1.1"/><circle cx="109.40" cy="100.5" r="3" fill="none" stroke="#2f82c8" stroke-width="1"/><line x1="141.30" y1="196.5" x2="141.30" y2="100.5" stroke="#3d8fd0" stroke-width="1.1"/><circle cx="141.30" cy="100.5" r="3" fill="none" stroke="#2f82c8" stroke-width="1"/><line x1="157.25" y1="196.5" x2="157.25" y2="100.5" stroke="#3d8fd0" stroke-width="1.1"/><circle cx="157.25" cy="100.5" r="3" fill="none" stroke="#2f82c8" stroke-width="1"/><line x1="205.10" y1="196.5" x2="205.10" y2="100.5" stroke="#3d8fd0" stroke-width="1.1"/><circle cx="205.10" cy="100.5" r="3" fill="none" stroke="#2f82c8" stroke-width="1"/><line x1="221.05" y1="196.5" x2="221.05" y2="100.5" stroke="#3d8fd0" stroke-width="1.1"/><circle cx="221.05" cy="100.5" r="3" fill="none" stroke="#2f82c8" stroke-width="1"/><line x1="237.00" y1="196.5" x2="237.00" y2="100.5" stroke="#3d8fd0" stroke-width="1.1"/><circle cx="237.00" cy="100.5" r="3" fill="none" stroke="#2f82c8" stroke-width="1"/><line x1="268.90" y1="196.5" x2="268.90" y2="100.5" stroke="#3d8fd0" stroke-width="1.1"/><circle cx="268.90" cy="100.5" r="3" fill="none" stroke="#2f82c8" stroke-width="1"/><line x1="284.85" y1="196.5" x2="284.85" y2="100.5" stroke="#3d8fd0" stroke-width="1.1"/><circle cx="284.85" cy="100.5" r="3" fill="none" stroke="#2f82c8" stroke-width="1"/><line x1="316.75" y1="196.5" x2="316.75" y2="100.5" stroke="#3d8fd0" stroke-width="1.1"/><circle cx="316.75" cy="100.5" r="3" fill="none" stroke="#2f82c8" stroke-width="1"/><line x1="364.60" y1="196.5" x2="364.60" y2="100.5" stroke="#3d8fd0" stroke-width="1.1"/><circle cx="364.60" cy="100.5" r="3" fill="none" stroke="#2f82c8" stroke-width="1"/><line x1="396.50" y1="196.5" x2="396.50" y2="100.5" stroke="#3d8fd0" stroke-width="1.1"/><circle cx="396.50" cy="100.5" r="3" fill="none" stroke="#2f82c8" stroke-width="1"/><circle cx="125.35" cy="196.5" r="3" fill="none" stroke="#2f82c8" stroke-width="1"/><circle cx="173.20" cy="196.5" r="3" fill="none" stroke="#2f82c8" stroke-width="1"/><circle cx="189.15" cy="196.5" r="3" fill="none" stroke="#2f82c8" stroke-width="1"/><circle cx="252.95" cy="196.5" r="3" fill="none" stroke="#2f82c8" stroke-width="1"/><circle cx="300.80" cy="196.5" r="3" fill="none" stroke="#2f82c8" stroke-width="1"/><circle cx="332.70" cy="196.5" r="3" fill="none" stroke="#2f82c8" stroke-width="1"/><circle cx="348.65" cy="196.5" r="3" fill="none" stroke="#2f82c8" stroke-width="1"/><circle cx="380.55" cy="196.5" r="3" fill="none" stroke="#2f82c8" stroke-width="1"/><text x="237.0" y="97.0" text-anchor="middle" font-size="10" fill="#222">resignal</text><rect x="77.5" y="237.5" width="319.0" height="96.0" fill="#fff"/><line x1="109.40" y1="237.5" x2="109.40" y2="333.5" stroke="#e2e2e2" stroke-width="1"/><line x1="141.30" y1="237.5" x2="141.30" y2="333.5" stroke="#e2e2e2" stroke-width="1"/><line x1="173.20" y1="237.5" x2="173.20" y2="333.5" stroke="#e2e2e2" stroke-width="1"/><line x1="205.10" y1="237.5" x2="205.10" y2="333.5" stroke="#e2e2e2" stroke-width="1"/><line x1="237.00" y1="237.5" x2="237.00" y2="333.5" stroke="#e2e2e2" stroke-width="1"/><line x1="268.90" y1="237.5" x2="268.90" y2="333.5" stroke="#e2e2e2" stroke-width="1"/><line x1="300.80" y1="237.5" x2="300.80" y2="333.5" stroke="#e2e2e2" stroke-width="1"/><line x1="332.70" y1="237.5" x2="332.70" y2="333.5" stroke="#e2e2e2" stroke-width="1"/><line x1="364.60" y1="237.5" x2="364.60" y2="333.5" stroke="#e2e2e2" stroke-width="1"/><line x1="77.5" y1="285.50" x2="396.5" y2="285.50" stroke="#e2e2e2" stroke-width="1"/><rect x="77.5" y="237.5" width="319.0" height="96.0" fill="none" stroke="#3c3c3c" stroke-width="1"/><path d="M77.50 333.5 v-3 M77.50 237.5 v3" stroke="#3c3c3c" stroke-width="1"/><text x="77.50" y="346.0" text-anchor="middle">0</text><path d="M109.40 333.5 v-3 M109.40 237.5 v3" stroke="#3c3c3c" stroke-width="1"/><text x="109.40" y="346.0" text-anchor="middle">2</text><path d="M141.30 333.5 v-3 M141.30 237.5 v3" stroke="#3c3c3c" stroke-width="1"/><text x="141.30" y="346.0" text-anchor="middle">4</text><path d="M173.20 333.5 v-3 M173.20 237.5 v3" stroke="#3c3c3c" stroke-width="1"/><text x="173.20" y="346.0" text-anchor="middle">6</text><path d="M205.10 333.5 v-3 M205.10 237.5 v3" stroke="#3c3c3c" stroke-width="1"/><text x="205.10" y="346.0" text-anchor="middle">8</text><path d="M237.00 333.5 v-3 M237.00 237.5 v3" stroke="#3c3c3c" stroke-width="1"/><text x="237.00" y="346.0" text-anchor="middle">10</text><path d="M268.90 333.5 v-3 M268.90 237.5 v3" stroke="#3c3c3c" stroke-width="1"/><text x="268.90" y="346.0" text-anchor="middle">12</text><path d="M300.80 333.5 v-3 M300.80 237.5 v3" stroke="#3c3c3c" stroke-width="1"/><text x="300.80" y="346.0" text-anchor="middle">14</text><path d="M332.70 333.5 v-3 M332.70 237.5 v3" stroke="#3c3c3c" stroke-width="1"/><text x="332.70" y="346.0" text-anchor="middle">16</text><path d="M364.60 333.5 v-3 M364.60 237.5 v3" stroke="#3c3c3c" stroke-width="1"/><text x="364.60" y="346.0" text-anchor="middle">18</text><path d="M396.50 333.5 v-3 M396.50 237.5 v3" stroke="#3c3c3c" stroke-width="1"/><text x="396.50" y="346.0" text-anchor="middle">20</text><path d="M77.5 333.50 h3 M396.5 333.50 h-3" stroke="#3c3c3c" stroke-width="1"/><text x="73.5" y="336.90" text-anchor="end">0</text><path d="M77.5 285.50 h3 M396.5 285.50 h-3" stroke="#3c3c3c" stroke-width="1"/><text x="73.5" y="288.90" text-anchor="end">0.5</text><path d="M77.5 237.50 h3 M396.5 237.50 h-3" stroke="#3c3c3c" stroke-width="1"/><text x="73.5" y="240.90" text-anchor="end">1</text><line x1="93.45" y1="333.5" x2="93.45" y2="237.5" stroke="#3d8fd0" stroke-width="1.1"/><circle cx="93.45" cy="237.5" r="3" fill="none" stroke="#2f82c8" stroke-width="1"/><line x1="109.40" y1="333.5" x2="109.40" y2="237.5" stroke="#3d8fd0" stroke-width="1.1"/><circle cx="109.40" cy="237.5" r="3" fill="none" stroke="#2f82c8" stroke-width="1"/><line x1="141.30" y1="333.5" x2="141.30" y2="237.5" stroke="#3d8fd0" stroke-width="1.1"/><circle cx="141.30" cy="237.5" r="3" fill="none" stroke="#2f82c8" stroke-width="1"/><line x1="157.25" y1="333.5" x2="157.25" y2="237.5" stroke="#3d8fd0" stroke-width="1.1"/><circle cx="157.25" cy="237.5" r="3" fill="none" stroke="#2f82c8" stroke-width="1"/><line x1="205.10" y1="333.5" x2="205.10" y2="237.5" stroke="#3d8fd0" stroke-width="1.1"/><circle cx="205.10" cy="237.5" r="3" fill="none" stroke="#2f82c8" stroke-width="1"/><line x1="221.05" y1="333.5" x2="221.05" y2="237.5" stroke="#3d8fd0" stroke-width="1.1"/><circle cx="221.05" cy="237.5" r="3" fill="none" stroke="#2f82c8" stroke-width="1"/><line x1="237.00" y1="333.5" x2="237.00" y2="237.5" stroke="#3d8fd0" stroke-width="1.1"/><circle cx="237.00" cy="237.5" r="3" fill="none" stroke="#2f82c8" stroke-width="1"/><line x1="268.90" y1="333.5" x2="268.90" y2="237.5" stroke="#3d8fd0" stroke-width="1.1"/><circle cx="268.90" cy="237.5" r="3" fill="none" stroke="#2f82c8" stroke-width="1"/><line x1="284.85" y1="333.5" x2="284.85" y2="237.5" stroke="#3d8fd0" stroke-width="1.1"/><circle cx="284.85" cy="237.5" r="3" fill="none" stroke="#2f82c8" stroke-width="1"/><line x1="316.75" y1="333.5" x2="316.75" y2="237.5" stroke="#3d8fd0" stroke-width="1.1"/><circle cx="316.75" cy="237.5" r="3" fill="none" stroke="#2f82c8" stroke-width="1"/><line x1="364.60" y1="333.5" x2="364.60" y2="237.5" stroke="#3d8fd0" stroke-width="1.1"/><circle cx="364.60" cy="237.5" r="3" fill="none" stroke="#2f82c8" stroke-width="1"/><line x1="396.50" y1="333.5" x2="396.50" y2="237.5" stroke="#3d8fd0" stroke-width="1.1"/><circle cx="396.50" cy="237.5" r="3" fill="none" stroke="#2f82c8" stroke-width="1"/><circle cx="125.35" cy="333.5" r="3" fill="none" stroke="#2f82c8" stroke-width="1"/><circle cx="173.20" cy="333.5" r="3" fill="none" stroke="#2f82c8" stroke-width="1"/><circle cx="189.15" cy="333.5" r="3" fill="none" stroke="#2f82c8" stroke-width="1"/><circle cx="252.95" cy="333.5" r="3" fill="none" stroke="#2f82c8" stroke-width="1"/><circle cx="300.80" cy="333.5" r="3" fill="none" stroke="#2f82c8" stroke-width="1"/><circle cx="332.70" cy="333.5" r="3" fill="none" stroke="#2f82c8" stroke-width="1"/><circle cx="348.65" cy="333.5" r="3" fill="none" stroke="#2f82c8" stroke-width="1"/><circle cx="380.55" cy="333.5" r="3" fill="none" stroke="#2f82c8" stroke-width="1"/><text x="237.0" y="234.0" text-anchor="middle" font-size="10" fill="#222">signal</text><text x="237" y="221" text-anchor="middle" font-size="10" fill="#222">x</text><text transform="translate(57.5,148.5) rotate(-90)" text-anchor="middle" font-size="10" fill="#222">y</text></g></svg><div class="fw" style="left:272.5px;top:123px;width:423px;height:353px;background:linear-gradient(90deg,#eef3f9 0,#e6eef7 60px,#eaf1f9 120px,#d6e3f2 170px,#c3d6ec 195px,#d9e6f4 215px,#bfd3ea 250px,#d3e2f2 280px,#c6d8ee 320px,#dde8f5 350px,#e3ecf7 423px) 0 0/100% 20px no-repeat,linear-gradient(#eef3f9,#f6f8fb)"><div class="ficon"></div><svg width="10.5" height="9" viewBox="0 0 16 16" style="position:absolute;left:5.5px;top:5.2px"><path d="M0.5 9.5 L5 6.5 L8.5 10 L4.5 12.5 Z" fill="#3f6fb5"/><path d="M5 6.5 L9.8 0.8 L8.5 10 Z" fill="#d9541e"/><path d="M9.8 0.8 L15.5 12.5 L11.5 10.5 L8 15 L4.5 12.5 L8.5 10 Z" fill="#f08a1c"/><path d="M9.8 0.8 L15.5 12.5 L12 10.6 Z" fill="#c8401a"/></svg><div class="ftitle">Figure 2</div><div class="wbtns lt" style="left:342px;top:-1px;width:75px;height:14px"><i style="left:18.5px"></i><i style="left:40px"></i><svg width="75" height="13" viewBox="0 0 75 13" style="position:absolute;left:0;top:0"><rect x="5" y="7.3" width="9" height="2.6" rx="1.1" fill="#fbfcfe" stroke="#4a6388" stroke-width="0.7"/><rect x="25.5" y="3.4" width="9" height="6.8" rx="1.2" fill="#fbfcfe" stroke="#4a6388" stroke-width="0.7"/><rect x="28.2" y="5.7" width="3.6" height="2.1" fill="#7aa3d6" stroke="#4a6388" stroke-width="0.5"/><path d="M54.2 4.5 L60.3 9.6 M60.3 4.5 L54.2 9.6" stroke="#4a6388" stroke-width="2.9" stroke-linecap="round"/><path d="M54.2 4.5 L60.3 9.6 M60.3 4.5 L54.2 9.6" stroke="#fbfcfe" stroke-width="1.7" stroke-linecap="round"/></svg></div><div class="finner" style="left:4px;top:18.5px;width:412.5px;height:328px"><div class="fmenu"><span style="left:5.5px">文件(F)</span><span style="left:46.0px">编辑(E)</span><span style="left:86.5px">查看(V)</span><span style="left:127.5px">插入(I)</span><span style="left:167.5px">工具(T)</span><span style="left:207.5px">桌面(D)</span><span style="left:248.5px">窗口(W)</span><span style="left:294.5px">帮助(H)</span><svg width="6.5" height="6.5" viewBox="0 0 8 8" style="position:absolute;right:3.5px;top:6px"><path d="M1 1 L6 6 M6.5 2.500 V6.500 H2.500" stroke="#222" stroke-width="1.300" fill="none"/></svg></div><div class="ftool"></div></div></div><svg class="abs" width="715" height="500" viewBox="0 0 715 500"><g transform="translate(281.16,164.08) scale(0.83)"><path d="M2.5 2.5 H9 L12.5 6 V14.5 H2.5 Z" fill="#fff" stroke="#7399d0" stroke-width="1.1"/><path d="M9 2.5 V6 H12.5" fill="#dde8f5" stroke="#7399d0" stroke-width="1"/><circle cx="2.3" cy="2.5" r="1.6" fill="#ea7a3c"/></g><g transform="translate(298.16,164.08) scale(0.83)"><path d="M1 5 H5 L6.5 6.5 H11.5 V8 H3.5 L1 13.5 Z" fill="#f0a63c" stroke="#cf8a2a" stroke-width="0.8"/><path d="M3.5 8 H13.5 L11 13.5 H1 Z" fill="#fbcd74" stroke="#cf8a2a" stroke-width="0.8"/><path d="M8 3.5 C10 1.5 12 2 12.5 4" fill="none" stroke="#c85a1a" stroke-width="1"/></g><g transform="translate(315.66,164.08) scale(0.83)"><rect x="1.5" y="2.5" width="11" height="11.5" fill="#3f52c6" stroke="#2b3a94" stroke-width="0.8"/><rect x="3.5" y="2.8" width="7" height="4.5" fill="#e6ecfa"/><rect x="4" y="9.5" width="6" height="4.2" fill="#15205a"/><rect x="5" y="10.3" width="1.6" height="2.8" fill="#dfe5f5"/></g><g transform="translate(332.16,164.08) scale(0.83)"><path d="M3.5 1.5 H8.5 L10 7 H2.5 Z" fill="#d6e6f8" stroke="#8aa0c0" stroke-width="0.7"/><path d="M0.8 8 L2.5 6.5 H10 L11.8 8 V12 L10 13.8 H2.5 L0.8 12 Z" fill="#c6c9cf" stroke="#868b93" stroke-width="0.8"/><path d="M2.5 10.5 H10 V13.5 H2.5 Z" fill="#dcdfe4" stroke="#80858d" stroke-width="0.6"/></g><rect x="347.5" y="163.0" width="1" height="15" fill="#a8a8a8"/><g transform="translate(356.66,164.08) scale(0.83)"><path d="M1.5 1 L1.5 12 L4.2 9.6 L6 13.8 L7.8 13 L6 9 L9.5 9 Z" fill="#fff" stroke="#111" stroke-width="1" stroke-linejoin="round"/></g><rect x="371.0" y="163.0" width="1" height="15" fill="#a8a8a8"/><g transform="translate(377.16,164.08) scale(0.83)"><path d="M7.5 8 L12 12.8" stroke="#e0a030" stroke-width="2.6" stroke-linecap="round"/><circle cx="5" cy="5.5" r="3.8" fill="#d6e9fb" stroke="#3a78c0" stroke-width="1.3"/><path d="M3 5.5 H7 M5 3.5 V7.5" stroke="#2a5aa0" stroke-width="1.2"/></g><g transform="translate(394.16,164.08) scale(0.83)"><path d="M7.5 8 L12 12.8" stroke="#e0a030" stroke-width="2.6" stroke-linecap="round"/><circle cx="5" cy="5.5" r="3.8" fill="#d6e9fb" stroke="#3a78c0" stroke-width="1.3"/><path d="M3 5.5 H7" stroke="#2a5aa0" stroke-width="1.2"/></g><g transform="translate(411.66,164.08) scale(0.83)"><path d="M4 8.5 V3.6 Q4.9 2.4 5.8 3.6 V2.2 Q6.8 1 7.8 2.2 V2.6 Q8.8 1.5 9.8 2.7 V3.9 Q10.8 3 11.8 4.2 V9.5 Q12 12.5 9.8 14 H5.8 Q3 11.5 0.8 8.6 Q1.8 6.8 4 8.5 Z" fill="#fbeed6" stroke="#5a78a8" stroke-width="1"/><path d="M5.8 3.6 V7.5 M7.8 2.6 V7.5 M9.8 3.9 V7.8" stroke="#9ab0d0" stroke-width="0.7"/></g><g transform="translate(427.66,164.08) scale(0.83)"><path d="M3.2 4.2 A5.6 5.6 0 1 0 7 2.4" fill="none" stroke="#27466e" stroke-width="1.9"/><path d="M0.3 3.2 L5.6 1.2 L5 6.4 Z" fill="#27466e"/><circle cx="7" cy="8.2" r="2.5" fill="#f2f5fb" stroke="#27466e" stroke-width="0.9"/><path d="M7 5.700 V10.700 M4.800 7.200 L9.200 9.400" stroke="#27466e" stroke-width="0.6"/></g><g transform="translate(445.16,164.08) scale(0.83)"><rect x="4.5" y="1" width="8.5" height="8.5" fill="#e9c890" stroke="#a9824a" stroke-width="0.7"/><path d="M0.5 7 H6.5 M3.5 4 V10" stroke="#111" stroke-width="1.1"/><path d="M2 9 Q5 14 10 13" fill="none" stroke="#2a4fd0" stroke-width="1.2"/></g><g transform="translate(463.16,164.08) scale(0.83)"><path d="M11.5 1 L5 8.5" stroke="#6f8fb8" stroke-width="2" stroke-linecap="round"/><path d="M5.5 7.5 L3 9 Q1 11.5 1 13.5 Q3.5 13 5 11.5 L6.5 9 Z" fill="#222"/><rect x="8.5" y="9.5" width="4" height="4" fill="#ee1c1c"/></g><path d="M479.5 170.0 h4 l-2 2.4 Z" fill="#222"/><rect x="487.0" y="163.0" width="1" height="15" fill="#a8a8a8"/><g transform="translate(493.66,164.08) scale(0.83)"><rect x="1.5" y="1.5" width="9" height="7" fill="#dfe8f4" stroke="#4a6484" stroke-width="1"/><rect x="3.5" y="5" width="9" height="7" fill="#c6d4e8" stroke="#4a6484" stroke-width="1"/><path d="M4.5 11 h2.5 m1 0 h2.5" stroke="#3c5a80" stroke-width="1.6"/></g><rect x="510.0" y="163.0" width="1" height="15" fill="#a8a8a8"/><defs><linearGradient id="cb272" x1="0" y1="0" x2="0" y2="1"><stop offset="0" stop-color="#7fb0ea"/><stop offset="0.5" stop-color="#e8e0d0"/><stop offset="1" stop-color="#f3b86a"/></linearGradient></defs><g transform="translate(518.66,164.08) scale(0.83)"><rect x="1" y="1.5" width="7" height="12" fill="url(#cb272)" stroke="#4a5a74" stroke-width="1"/></g><g transform="translate(533.16,164.08) scale(0.83)"><rect x="1" y="1.5" width="11.5" height="12" fill="#f4f7fc" stroke="#3f5c8c" stroke-width="1"/><rect x="2.8" y="4" width="3.4" height="2.2" fill="#e03030"/><rect x="2.8" y="8.3" width="3.4" height="2.2" fill="#3050d8"/><path d="M7.5 5 h3.5 M7.5 9.5 h3.5" stroke="#333" stroke-width="1"/></g><rect x="549.5" y="163.0" width="1" height="15" fill="#a8a8a8"/><g transform="translate(557.66,164.08) scale(0.83)"><rect x="1.5" y="4" width="7" height="7" fill="#8e8e8e" stroke="#a8a8a8" stroke-width="1"/></g><g transform="translate(572.66,164.08) scale(0.83)"><rect x="1" y="2.5" width="12" height="10.5" fill="#f2f5fa" stroke="#2f4a78" stroke-width="1.2"/><path d="M1 11 H13 M10.5 2.5 V11" stroke="#2f4a78" stroke-width="1"/></g><g font-family='"Liberation Sans","Noto Serif CJK SC",sans-serif' font-size="9.8" fill="#3a3a3a"><rect x="331" y="204" width="320" height="235" fill="#fff"/><polyline points="331.32,432.75 331.64,419.61 331.96,413.10 332.28,420.95 332.60,409.60 332.92,418.59 333.24,425.10 333.56,432.86 333.88,428.91 334.20,425.12 334.52,421.88 334.84,418.98 335.16,427.06 335.48,433.03 335.80,428.58 336.12,415.18 336.44,429.87 336.76,425.91 337.08,413.99 337.40,434.45 337.72,423.38 338.04,412.67 338.36,429.57 338.68,424.30 339.00,415.21 339.32,431.42 339.64,424.73 339.96,420.34 340.28,422.09 340.60,425.65 340.92,430.02 341.24,425.27 341.56,427.20 341.88,425.49 342.20,247.08 342.52,417.97 342.84,419.90 343.16,428.15 343.48,423.88 343.80,428.78 344.12,425.90 344.44,427.51 344.76,422.32 345.08,427.23 345.40,425.79 345.72,421.04 346.04,426.54 346.36,415.34 346.68,430.47 347.00,420.55 347.32,426.39 347.64,426.33 347.96,422.76 348.28,424.74 348.60,426.51 348.92,436.13 349.24,432.34 349.56,421.26 349.88,424.71 350.20,421.54 350.52,412.22 350.84,421.81 351.16,433.41 351.48,428.23 351.80,423.53 352.12,429.48 352.44,411.30 352.76,413.06 353.08,417.63 353.40,425.58 353.72,417.86 354.04,431.46 354.36,428.24 354.68,425.73 355.00,420.54 355.32,425.36 355.64,431.34 355.96,427.67 356.28,427.98 356.60,428.37 356.92,430.76 357.24,426.51 357.56,425.97 357.88,419.74 358.20,419.18 358.52,424.75 358.84,416.84 359.16,419.66 359.48,416.19 359.80,421.97 360.12,419.07 360.44,413.48 360.76,433.83 361.08,416.66 361.40,428.77 361.72,425.52 362.04,395.13 362.36,421.09 362.68,431.13 363.00,422.29 363.32,432.94 363.64,427.45 363.96,418.72 364.28,426.31 364.60,423.40 364.92,420.85 365.24,418.48 365.56,420.10 365.88,435.48 366.20,426.43 366.52,425.73 366.84,433.34 367.16,424.42 367.48,423.25 367.80,418.26 368.12,413.30 368.44,431.52 368.76,429.56 369.08,422.28 369.40,431.43 369.72,429.68 370.04,423.84 370.36,430.68 370.68,419.55 371.00,417.34 371.32,434.09 371.64,424.57 371.96,419.17 372.28,410.03 372.60,428.81 372.92,430.69 373.24,416.62 373.56,415.20 373.88,430.15 374.20,426.08 374.52,421.04 374.84,417.73 375.16,430.71 375.48,422.17 375.80,418.87 376.12,424.28 376.44,430.78 376.76,434.02 377.08,428.69 377.40,418.86 377.72,433.69 378.04,435.39 378.36,427.37 378.68,433.10 379.00,431.08 379.32,434.53 379.64,424.71 379.96,421.53 380.28,426.32 380.60,431.39 380.92,427.86 381.24,423.57 381.56,413.38 381.88,406.00 382.20,429.37 382.52,435.22 382.84,418.20 383.16,414.27 383.48,425.80 383.80,419.83 384.12,417.01 384.44,423.22 384.76,416.77 385.08,434.50 385.40,428.85 385.72,428.76 386.04,431.69 386.36,415.13 386.68,434.22 387.00,422.02 387.32,432.88 387.64,427.39 387.96,426.46 388.28,430.45 388.60,424.77 388.92,424.53 389.24,428.10 389.56,420.64 389.88,430.86 390.20,430.25 390.52,427.49 390.84,427.10 391.16,429.99 391.48,414.71 391.80,418.28 392.12,399.83 392.44,427.25 392.76,429.52 393.08,425.93 393.40,243.95 393.72,425.09 394.04,414.50 394.36,427.04 394.68,422.46 395.00,423.47 395.32,397.88 395.64,433.16 395.96,420.47 396.28,412.97 396.60,423.33 396.92,428.59 397.24,422.02 397.56,421.20 397.88,422.34 398.20,431.13 398.52,410.27 398.84,412.23 399.16,426.35 399.48,423.51 399.80,433.87 400.12,407.35 400.44,418.55 400.76,422.72 401.08,396.70 401.40,430.33 401.72,428.25 402.04,429.28 402.36,423.47 402.68,432.35 403.00,415.83 403.32,425.74 403.64,426.03 403.96,432.04 404.28,421.77 404.60,418.61 404.92,422.85 405.24,429.36 405.56,419.47 405.88,431.16 406.20,418.30 406.52,423.74 406.84,428.56 407.16,424.90 407.48,422.86 407.80,429.08 408.12,401.79 408.44,426.41 408.76,415.98 409.08,418.05 409.40,432.17 409.72,422.53 410.04,428.21 410.36,420.25 410.68,424.40 411.00,425.82 411.32,415.85 411.64,433.29 411.96,424.15 412.28,427.92 412.60,434.03 412.92,420.26 413.24,424.07 413.56,415.90 413.88,423.43 414.20,427.77 414.52,408.22 414.84,431.79 415.16,433.43 415.48,420.75 415.80,427.22 416.12,427.38 416.44,416.62 416.76,427.93 417.08,416.12 417.40,422.58 417.72,427.90 418.04,433.22 418.36,429.31 418.68,410.91 419.00,426.67 419.32,430.87 419.64,428.41 419.96,415.66 420.28,430.77 420.60,419.67 420.92,431.38 421.24,411.67 421.56,424.61 421.88,433.74 422.20,414.01 422.52,427.43 422.84,420.77 423.16,424.72 423.48,432.33 423.80,432.01 424.12,431.08 424.44,430.84 424.76,433.43 425.08,433.61 425.40,412.81 425.72,432.37 426.04,424.98 426.36,425.47 426.68,429.84 427.00,420.03 427.32,413.55 427.64,425.62 427.96,435.61 428.28,399.64 428.60,433.59 428.92,426.92 429.24,424.46 429.56,416.00 429.88,418.42 430.20,423.22 430.52,426.78 430.84,418.08 431.16,416.91 431.48,416.80 431.80,421.08 432.12,432.21 432.44,428.40 432.76,425.35 433.08,425.04 433.40,418.13 433.72,429.43 434.04,422.18 434.36,427.17 434.68,419.73 435.00,430.19 435.32,425.51 435.64,432.07 435.96,429.89 436.28,413.74 436.60,428.12 436.92,415.95 437.24,424.71 437.56,433.89 437.88,419.27 438.20,433.45 438.52,418.31 438.84,435.35 439.16,421.99 439.48,430.76 439.80,427.68 440.12,412.46 440.44,425.35 440.76,422.32 441.08,420.56 441.40,431.92 441.72,409.55 442.04,414.96 442.36,430.96 442.68,424.34 443.00,428.65 443.32,420.56 443.64,434.30 443.96,424.91 444.28,419.28 444.60,246.30 444.92,431.96 445.24,418.13 445.56,429.43 445.88,418.87 446.20,425.17 446.52,430.85 446.84,420.71 447.16,418.86 447.48,421.48 447.80,411.31 448.12,429.12 448.44,429.47 448.76,431.12 449.08,424.46 449.40,426.76 449.72,427.45 450.04,425.78 450.36,428.81 450.68,435.75 451.00,425.59 451.32,428.78 451.64,425.95 451.96,414.14 452.28,430.50 452.60,422.70 452.92,422.57 453.24,428.69 453.56,425.60 453.88,410.77 454.20,427.68 454.52,421.19 454.84,417.90 455.16,427.39 455.48,406.96 455.80,422.92 456.12,425.10 456.44,421.14 456.76,426.37 457.08,421.19 457.40,428.80 457.72,414.24 458.04,424.41 458.36,429.37 458.68,426.15 459.00,415.86 459.32,418.89 459.64,425.38 459.96,427.53 460.28,427.14 460.60,409.05 460.92,431.87 461.24,416.12 461.56,417.32 461.88,429.67 462.20,427.57 462.52,423.94 462.84,419.02 463.16,412.65 463.48,406.30 463.80,428.69 464.12,430.25 464.44,425.32 464.76,424.15 465.08,422.33 465.40,431.98 465.72,422.53 466.04,414.57 466.36,414.90 466.68,397.55 467.00,414.51 467.32,411.73 467.64,433.56 467.96,414.86 468.28,428.86 468.60,428.04 468.92,425.80 469.24,412.24 469.56,423.30 469.88,427.52 470.20,427.17 470.52,415.41 470.84,418.45 471.16,431.32 471.48,429.25 471.80,427.21 472.12,429.81 472.44,424.04 472.76,429.68 473.08,423.84 473.40,413.69 473.72,417.62 474.04,432.17 474.36,429.98 474.68,426.55 475.00,422.54 475.32,426.97 475.64,429.20 475.96,427.65 476.28,430.04 476.60,417.17 476.92,421.51 477.24,426.57 477.56,421.45 477.88,424.79 478.20,424.68 478.52,427.28 478.84,425.32 479.16,408.15 479.48,419.50 479.80,418.29 480.12,431.60 480.44,425.05 480.76,427.29 481.08,432.42 481.40,426.83 481.72,432.81 482.04,429.50 482.36,419.12 482.68,421.74 483.00,421.49 483.32,432.67 483.64,430.79 483.96,434.60 484.28,432.21 484.60,432.13 484.92,411.79 485.24,415.91 485.56,430.03 485.88,429.16 486.20,411.72 486.52,423.93 486.84,427.26 487.16,425.67 487.48,428.84 487.80,423.69 488.12,420.91 488.44,424.86 488.76,418.50 489.08,431.85 489.40,423.33 489.72,407.06 490.04,431.09 490.36,425.20 490.68,422.84 491.00,427.76 491.32,411.34 491.64,425.36 491.96,425.47 492.28,415.51 492.60,434.90 492.92,416.91 493.24,431.50 493.56,427.09 493.88,425.31 494.20,425.51 494.52,433.87 494.84,428.10 495.16,427.45 495.48,412.16 495.80,254.92 496.12,423.68 496.44,413.86 496.76,417.10 497.08,427.14 497.40,431.77 497.72,423.27 498.04,428.00 498.36,435.28 498.68,409.05 499.00,410.81 499.32,424.50 499.64,416.25 499.96,422.09 500.28,414.27 500.60,425.66 500.92,423.70 501.24,429.63 501.56,429.35 501.88,424.75 502.20,429.58 502.52,434.22 502.84,427.26 503.16,420.35 503.48,428.76 503.80,417.14 504.12,421.40 504.44,422.40 504.76,415.97 505.08,432.82 505.40,430.50 505.72,415.20 506.04,415.31 506.36,432.70 506.68,419.76 507.00,434.92 507.32,431.37 507.64,431.93 507.96,428.48 508.28,426.94 508.60,415.12 508.92,426.16 509.24,431.61 509.56,428.84 509.88,435.54 510.20,434.31 510.52,426.25 510.84,424.92 511.16,429.22 511.48,427.08 511.80,432.08 512.12,422.29 512.44,426.87 512.76,430.84 513.08,425.16 513.40,429.96 513.72,428.51 514.04,431.61 514.36,419.59 514.68,428.72 515.00,412.21 515.32,426.67 515.64,430.96 515.96,421.35 516.28,420.72 516.60,416.43 516.92,431.45 517.24,419.35 517.56,417.24 517.88,428.31 518.20,425.87 518.52,423.04 518.84,429.30 519.16,416.82 519.48,421.47 519.80,417.35 520.12,425.94 520.44,424.80 520.76,430.21 521.08,428.15 521.40,420.82 521.72,411.90 522.04,431.03 522.36,433.49 522.68,432.99 523.00,426.18 523.32,419.28 523.64,429.66 523.96,425.50 524.28,424.86 524.60,417.98 524.92,430.79 525.24,434.96 525.56,425.01 525.88,427.48 526.20,428.51 526.52,419.81 526.84,421.80 527.16,432.55 527.48,424.31 527.80,419.14 528.12,415.18 528.44,436.46 528.76,418.87 529.08,433.74 529.40,421.83 529.72,423.43 530.04,412.52 530.36,422.81 530.68,432.92 531.00,422.06 531.32,429.14 531.64,418.16 531.96,434.17 532.28,427.98 532.60,421.94 532.92,430.95 533.24,422.53 533.56,421.51 533.88,420.72 534.20,403.81 534.52,426.54 534.84,431.22 535.16,429.05 535.48,426.92 535.80,433.37 536.12,421.27 536.44,433.12 536.76,433.27 537.08,413.91 537.40,418.91 537.72,429.16 538.04,427.70 538.36,418.34 538.68,423.04 539.00,428.97 539.32,425.96 539.64,417.39 539.96,436.29 540.28,406.06 540.60,424.00 540.92,430.44 541.24,419.08 541.56,432.75 541.88,426.59 542.20,423.87 542.52,429.27 542.84,416.28 543.16,421.52 543.48,430.83 543.80,431.02 544.12,433.15 544.44,423.90 544.76,430.34 545.08,424.40 545.40,418.53 545.72,416.52 546.04,431.78 546.36,427.85 546.68,426.47 547.00,227.50 547.32,426.45 547.64,425.78 547.96,420.19 548.28,428.29 548.60,427.67 548.92,426.91 549.24,431.04 549.56,422.84 549.88,426.75 550.20,414.85 550.52,418.47 550.84,429.57 551.16,429.36 551.48,419.55 551.80,424.11 552.12,435.25 552.44,422.84 552.76,426.84 553.08,419.48 553.40,410.05 553.72,414.51 554.04,421.47 554.36,415.01 554.68,428.64 555.00,427.74 555.32,433.23 555.64,416.98 555.96,430.98 556.28,424.25 556.60,424.97 556.92,418.69 557.24,426.95 557.56,431.22 557.88,427.03 558.20,433.58 558.52,428.36 558.84,422.84 559.16,433.29 559.48,407.03 559.80,424.51 560.12,428.38 560.44,418.10 560.76,431.32 561.08,428.02 561.40,413.62 561.72,429.40 562.04,420.74 562.36,432.63 562.68,424.58 563.00,422.30 563.32,429.93 563.64,427.93 563.96,424.27 564.28,423.57 564.60,430.98 564.92,426.58 565.24,396.93 565.56,428.01 565.88,419.47 566.20,430.08 566.52,425.76 566.84,424.82 567.16,423.47 567.48,421.08 567.80,419.19 568.12,421.45 568.44,418.88 568.76,416.25 569.08,427.95 569.40,418.30 569.72,424.79 570.04,429.06 570.36,430.61 570.68,420.00 571.00,422.72 571.32,432.90 571.64,423.62 571.96,433.69 572.28,426.89 572.60,423.91 572.92,422.46 573.24,430.91 573.56,433.68 573.88,423.82 574.20,418.55 574.52,419.17 574.84,427.40 575.16,423.81 575.48,421.05 575.80,416.75 576.12,425.26 576.44,416.66 576.76,428.09 577.08,429.76 577.40,428.48 577.72,420.81 578.04,416.28 578.36,425.60 578.68,421.54 579.00,431.30 579.32,425.00 579.64,426.19 579.96,426.24 580.28,430.33 580.60,422.98 580.92,422.03 581.24,422.72 581.56,420.51 581.88,425.81 582.20,417.49 582.52,423.91 582.84,416.41 583.16,426.59 583.48,421.45 583.80,430.17 584.12,432.57 584.44,413.98 584.76,427.22 585.08,433.66 585.40,423.06 585.72,413.87 586.04,419.89 586.36,407.73 586.68,413.75 587.00,425.85 587.32,429.50 587.64,433.05 587.96,428.85 588.28,422.80 588.60,415.12 588.92,436.08 589.24,418.59 589.56,420.00 589.88,421.64 590.20,431.53 590.52,433.41 590.84,420.65 591.16,422.63 591.48,427.24 591.80,427.63 592.12,434.13 592.44,405.61 592.76,418.01 593.08,410.17 593.40,418.57 593.72,425.80 594.04,417.74 594.36,430.14 594.68,422.02 595.00,420.50 595.32,426.87 595.64,416.81 595.96,426.35 596.28,415.92 596.60,423.40 596.92,428.48 597.24,429.05 597.56,435.84 597.88,423.89 598.20,235.33 598.52,429.66 598.84,425.46 599.16,408.51 599.48,426.86 599.80,413.53 600.12,418.32 600.44,425.21 600.76,422.74 601.08,433.04 601.40,424.85 601.72,420.11 602.04,429.56 602.36,433.47 602.68,434.26 603.00,430.86 603.32,429.43 603.64,418.93 603.96,425.79 604.28,424.52 604.60,428.16 604.92,428.40 605.24,424.22 605.56,420.44 605.88,430.47 606.20,426.19 606.52,422.58 606.84,411.80 607.16,428.89 607.48,426.87 607.80,423.94 608.12,431.23 608.44,423.18 608.76,410.13 609.08,428.82 609.40,425.44 609.72,431.75 610.04,424.82 610.36,410.52 610.68,424.41 611.00,429.86 611.32,428.20 611.64,422.91 611.96,417.34 612.28,425.89 612.60,425.29 612.92,418.82 613.24,432.03 613.56,412.58 613.88,425.70 614.20,427.86 614.52,419.65 614.84,429.11 615.16,431.14 615.48,429.08 615.80,422.02 616.12,419.08 616.44,425.92 616.76,429.47 617.08,424.35 617.40,431.31 617.72,419.76 618.04,414.43 618.36,428.06 618.68,427.49 619.00,423.43 619.32,420.61 619.64,433.26 619.96,421.97 620.28,418.68 620.60,419.28 620.92,426.13 621.24,418.43 621.56,424.33 621.88,430.35 622.20,428.62 622.52,423.53 622.84,424.23 623.16,419.02 623.48,421.14 623.80,429.87 624.12,426.80 624.44,419.66 624.76,425.81 625.08,429.66 625.40,413.62 625.72,425.96 626.04,428.24 626.36,424.93 626.68,428.36 627.00,428.88 627.32,422.24 627.64,419.21 627.96,426.61 628.28,430.85 628.60,425.52 628.92,426.73 629.24,426.18 629.56,429.40 629.88,419.87 630.20,430.07 630.52,433.90 630.84,421.45 631.16,420.52 631.48,429.42 631.80,424.42 632.12,423.74 632.44,414.66 632.76,429.15 633.08,424.45 633.40,428.98 633.72,420.54 634.04,411.09 634.36,427.09 634.68,422.34 635.00,424.59 635.32,430.09 635.64,426.49 635.96,412.13 636.28,419.05 636.60,424.92 636.92,422.26 637.24,431.22 637.56,426.54 637.88,415.87 638.20,430.33 638.52,408.91 638.84,417.64 639.16,421.74 639.48,427.18 639.80,432.35 640.12,428.47 640.44,420.56 640.76,426.40 641.08,419.00 641.40,429.82 641.72,418.41 642.04,417.23 642.36,420.98 642.68,418.29 643.00,429.70 643.32,433.08 643.64,433.47 643.96,420.60 644.28,425.26 644.60,420.07 644.92,428.67 645.24,427.64 645.56,415.87 645.88,402.88 646.20,432.11 646.52,419.63 646.84,424.17 647.16,435.71 647.48,423.09 647.80,428.71 648.12,427.55 648.44,410.81 648.76,420.52 649.08,433.37 649.40,421.85 649.72,435.07 650.04,416.24 650.36,423.45 650.68,422.83 651.00,434.87" fill="none" stroke="#1a72c2" stroke-width="0.8" stroke-linejoin="round"/><rect x="331" y="204" width="320" height="235" fill="none" stroke="#3c3c3c" stroke-width="1"/><path d="M331 439 v-3 M331 204 v3" stroke="#3c3c3c" stroke-width="1"/><text x="331" y="452" text-anchor="middle">0</text><path d="M363 439 v-3 M363 204 v3" stroke="#3c3c3c" stroke-width="1"/><text x="363" y="452" text-anchor="middle">100</text><path d="M395 439 v-3 M395 204 v3" stroke="#3c3c3c" stroke-width="1"/><text x="395" y="452" text-anchor="middle">200</text><path d="M427 439 v-3 M427 204 v3" stroke="#3c3c3c" stroke-width="1"/><text x="427" y="452" text-anchor="middle">300</text><path d="M459 439 v-3 M459 204 v3" stroke="#3c3c3c" stroke-width="1"/><text x="459" y="452" text-anchor="middle">400</text><path d="M491 439 v-3 M491 204 v3" stroke="#3c3c3c" stroke-width="1"/><text x="491" y="452" text-anchor="middle">500</text><path d="M523 439 v-3 M523 204 v3" stroke="#3c3c3c" stroke-width="1"/><text x="523" y="452" text-anchor="middle">600</text><path d="M555 439 v-3 M555 204 v3" stroke="#3c3c3c" stroke-width="1"/><text x="555" y="452" text-anchor="middle">700</text><path d="M587 439 v-3 M587 204 v3" stroke="#3c3c3c" stroke-width="1"/><text x="587" y="452" text-anchor="middle">800</text><path d="M619 439 v-3 M619 204 v3" stroke="#3c3c3c" stroke-width="1"/><text x="619" y="452" text-anchor="middle">900</text><path d="M651 439 v-3 M651 204 v3" stroke="#3c3c3c" stroke-width="1"/><text x="651" y="452" text-anchor="middle">1000</text><path d="M331 439.00 h3 M651 439.00 h-3" stroke="#3c3c3c" stroke-width="1"/><text x="326.5" y="442.50" text-anchor="end">0</text><path d="M331 399.83 h3 M651 399.83 h-3" stroke="#3c3c3c" stroke-width="1"/><text x="326.5" y="403.33" text-anchor="end">0.1</text><path d="M331 360.67 h3 M651 360.67 h-3" stroke="#3c3c3c" stroke-width="1"/><text x="326.5" y="364.17" text-anchor="end">0.2</text><path d="M331 321.50 h3 M651 321.50 h-3" stroke="#3c3c3c" stroke-width="1"/><text x="326.5" y="325.00" text-anchor="end">0.3</text><path d="M331 282.33 h3 M651 282.33 h-3" stroke="#3c3c3c" stroke-width="1"/><text x="326.5" y="285.83" text-anchor="end">0.4</text><path d="M331 243.17 h3 M651 243.17 h-3" stroke="#3c3c3c" stroke-width="1"/><text x="326.5" y="246.67" text-anchor="end">0.5</text><path d="M331 204.00 h3 M651 204.00 h-3" stroke="#3c3c3c" stroke-width="1"/><text x="326.5" y="207.50" text-anchor="end">0.6</text><text x="491" y="198.5" text-anchor="middle" font-size="10.5" fill="#222">ofdm频谱图</text></g></svg><svg class="abs" width="715" height="500" viewBox="0 0 715 500"><path d="M495.800 428 L495.800 444 Q504 450.200 518 450.400 Q531 450.200 538.700 444 L538.700 428 Z" fill="#1b6fc2"/><path d="M495.800 431.600 L517.800 439 L538.700 431.600" fill="none" stroke="#f3f6fa" stroke-width="2.100"/><path d="M484.800 422.600 L518 409.600 L553 421.300 L553 422.600 L517.800 437 L484.800 424.200 Z" fill="#1b6fc2"/><path d="M517.500 419.800 L536.500 427.800" fill="none" stroke="#dfe9f5" stroke-width="1.100" stroke-dasharray="2.200 1.300"/><path d="M546.600 423.500 L548.200 438.500" fill="none" stroke="#1b6fc2" stroke-width="1.800"/><path d="M546 438.500 L550.600 436.800 L554.300 457.300 L549.800 459.600 Z" fill="#1b6fc2"/><g font-family='"Liberation Sans","Noto Sans CJK SC",sans-serif'><text x="566" y="434.300" font-size="26.500" font-weight="900" fill="#1b6fc2" stroke="#1b6fc2" stroke-width="0.900" stroke-linejoin="round" textLength="112.600" lengthAdjust="spacing">必过源码</text><text x="561.500" y="454.300" font-size="19.200" font-weight="bold" font-style="italic" fill="#0a0a0a" stroke="#0a0a0a" stroke-width="0.600" textLength="87" lengthAdjust="spacingAndGlyphs">Biguo100</text><text x="649" y="454.300" font-size="19.200" font-weight="bold" font-style="italic" fill="#ee1111" stroke="#ee1111" stroke-width="0.600" textLength="30.500" lengthAdjust="spacingAndGlyphs">.CN</text></g></svg></body></html>
